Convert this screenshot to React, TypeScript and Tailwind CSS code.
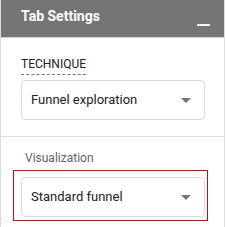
import React from "react";

function SelectBox({ label }: { label: string }) {
  return (
    <div className="flex h-[40px] w-[184px] items-center justify-between rounded-[4px] border border-[#dadce0] bg-white pl-[9px] pr-[13px]">
      <span className="text-[13px] leading-[20px] text-[#202124]">{label}</span>
      <span className="mt-[1px] h-0 w-0 border-l-[5px] border-r-[5px] border-t-[5px] border-l-transparent border-r-transparent border-t-[#757575]" />
    </div>
  );
}

export default function App() {
  return (
    <div className="h-[227px] w-[225px] border-l border-r border-[#dcdcdc] bg-white font-['Roboto',sans-serif]">
      <div className="flex h-[38px] justify-between border-b border-[#cfcfcf] bg-[#757575] pl-[20px] pr-[14px] pt-[8px]">
        <span className="text-[14px] font-bold leading-[16px] text-white">Tab Settings</span>
        <span className="mt-[16px] h-[2px] w-[13px] bg-[#f5f5f5]" />
      </div>
      <div className="pl-[20px] pt-[13px]">
        <span className="inline-block border-b border-dashed border-[#757575] pb-[2px] text-[12px] leading-[16px] text-[#212121]">
          TECHNIQUE
        </span>
        <div className="mt-[5px] pb-[16px]">
          <SelectBox label="Funnel exploration" />
        </div>
      </div>
      <div className="h-px w-full bg-[#e0e0e0]" />
      <div className="pl-[24px] pt-[13px] text-[12px] leading-[16px] text-[#5f6368]">Visualization</div>
      <div className="ml-[12px] mt-[4px] w-[195px] border border-[#e00000] pb-[3px] pl-[7px] pr-[2px] pt-[6px]">
        <SelectBox label="Standard funnel" />
      </div>
    </div>
  );
}
